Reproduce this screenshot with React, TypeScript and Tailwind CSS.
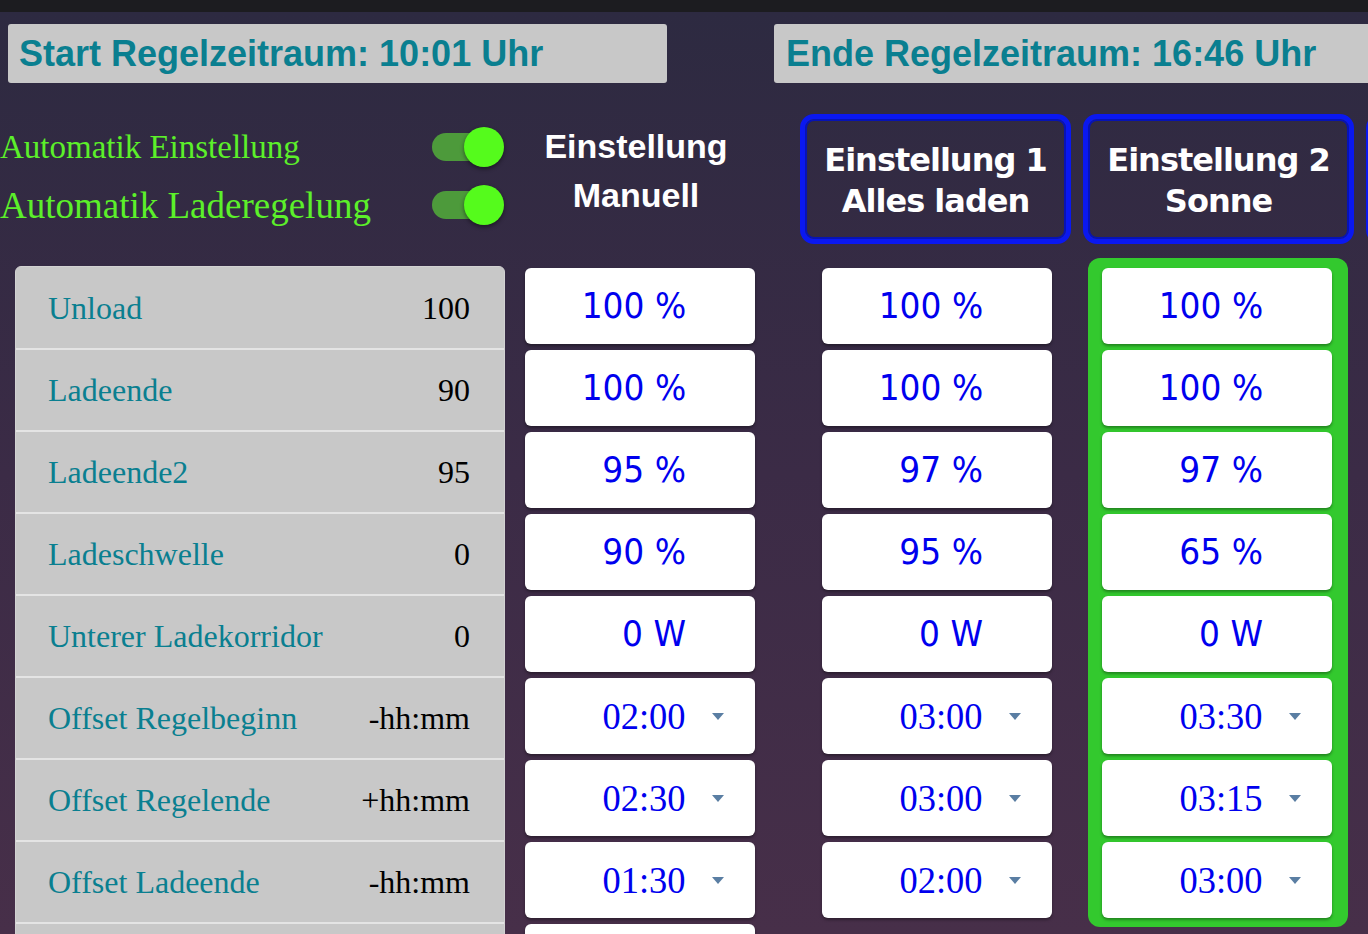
import React from 'react';

type Cell = { value: string; time?: boolean };

const rows: { label: string; unit: string }[] = [
  { label: 'Unload', unit: '100' },
  { label: 'Ladeende', unit: '90' },
  { label: 'Ladeende2', unit: '95' },
  { label: 'Ladeschwelle', unit: '0' },
  { label: 'Unterer Ladekorridor', unit: '0' },
  { label: 'Offset Regelbeginn', unit: '-hh:mm' },
  { label: 'Offset Regelende', unit: '+hh:mm' },
  { label: 'Offset Ladeende', unit: '-hh:mm' },
  { label: '', unit: '' },
];

const pct = (v: string): Cell => ({ value: v });
const tm = (v: string): Cell => ({ value: v, time: true });

const manual: Cell[] = [pct('100 %'), pct('100 %'), pct('95 %'), pct('90 %'), pct('0 W'), tm('02:00'), tm('02:30'), tm('01:30'), pct('')];
const preset1: Cell[] = [pct('100 %'), pct('100 %'), pct('97 %'), pct('95 %'), pct('0 W'), tm('03:00'), tm('03:00'), tm('02:00')];
const preset2: Cell[] = [pct('100 %'), pct('100 %'), pct('97 %'), pct('65 %'), pct('0 W'), tm('03:30'), tm('03:15'), tm('03:00')];

function Caret() {
  return (
    <svg width="12" height="7" viewBox="0 0 12 7" className="ml-[26px] mr-[31px] shrink-0">
      <path d="M0 0h12L6 7z" fill="#5a7ea3" />
    </svg>
  );
}

function ValueCell({ cell }: { cell: Cell }) {
  return (
    <div className="flex h-[76px] w-[230px] items-center justify-end rounded-[6px] bg-white shadow-[0_2px_3px_rgba(0,0,0,0.35)]">
      {cell.time ? (
        <>
          <span className="inline-block origin-right scale-x-[0.96] text-[38px] leading-none text-[#0000ee] [font-family:'Liberation_Serif',serif]">
            {cell.value}
          </span>
          <Caret />
        </>
      ) : (
        <span className="mr-[69px] inline-block origin-right scale-x-[0.94] text-[35px] leading-none text-[#0000ee] [font-family:'DejaVu_Sans',sans-serif]">
          {cell.value}
        </span>
      )}
    </div>
  );
}

function Toggle() {
  return (
    <div className="relative h-[40px] w-[72px]">
      <div className="absolute left-0 top-[6px] h-[28px] w-[56px] rounded-full bg-[#4d9a3b]" />
      <div className="absolute right-0 top-0 h-[40px] w-[40px] rounded-full bg-[#55fb1c] shadow-[0_2px_4px_rgba(0,0,0,0.45)]" />
    </div>
  );
}

function PresetButton({ top, bottom }: { top: string; bottom: string }) {
  return (
    <div className="flex h-[130px] w-[271px] shrink-0 flex-col items-center justify-center rounded-[14px] border-[5px] border-[#0a18f0] pt-[3px] shadow-[inset_0_0_0_2px_#0713b4] text-[32px] font-bold leading-[41px] tracking-[-1px] text-white [font-family:'DejaVu_Sans',sans-serif]">
      <span>{top}</span>
      <span>{bottom}</span>
    </div>
  );
}

export default function App() {
  return (
    <div className="h-[934px] w-[1368px] overflow-hidden bg-[#1c1c20]">
      <div className="mt-3 flex h-[922px] flex-col bg-linear-to-b from-[#2d2a41] via-[#3b2b46] to-[#472f49]">
        {/* time window */}
        <div className="mt-3 flex gap-[107px] pl-2 [font-family:'Liberation_Sans',Arial,sans-serif]">
          <div className="flex h-[59px] w-[659px] shrink-0 items-center rounded-[3px] bg-[#c8c8c8] pl-[11px] text-[36px] font-bold text-[#0a7f90]">
            Start Regelzeitraum: 10:01 Uhr
          </div>
          <div className="flex h-[59px] w-[640px] shrink-0 items-center rounded-[3px] bg-[#c8c8c8] pl-[12px] text-[36px] font-bold text-[#0a7f90]">
            Ende Regelzeitraum: 16:46 Uhr
          </div>
        </div>

        {/* switches and presets */}
        <div className="mt-[31px] flex h-[130px]">
          <div className="relative w-[510px] shrink-0 text-[#5cf02a] [font-family:'Liberation_Serif',serif]">
            <div className="mt-[13px] flex h-[40px] items-center justify-between pr-[6px]">
              <span className="text-[33px] leading-none">Automatik Einstellung</span>
              <Toggle />
            </div>
            <div className="mt-[18px] flex h-[40px] items-center justify-between pr-[6px]">
              <span className="text-[37px] leading-none">Automatik Laderegelung</span>
              <Toggle />
            </div>
          </div>
          <div className="flex w-[252px] shrink-0 flex-col items-center pt-[8px] text-[34px] font-bold leading-[49px] text-white [font-family:'Liberation_Sans',Arial,sans-serif]">
            <span>Einstellung</span>
            <span>Manuell</span>
          </div>
          <div className="ml-[38px] flex gap-[12px]">
            <PresetButton top="Einstellung 1" bottom="Alles laden" />
            <PresetButton top="Einstellung 2" bottom="Sonne" />
            <div className="h-[130px] w-[271px] shrink-0 rounded-[14px] border-[5px] border-[#0a18f0]" />
          </div>
        </div>

        {/* values */}
        <div className="mt-[14px] flex items-start">
          <div className="ml-[15px] mt-[8px] w-[490px] shrink-0 overflow-hidden rounded-t-[6px] border border-[#d2d2d2] bg-[#c8c8c8] [font-family:'Liberation_Serif',serif]">
            {rows.map((r, i) => (
              <div
                key={i}
                className={`flex items-center justify-between pl-[32px] pr-[34px] text-[32px] ${i === 0 ? 'h-[81px]' : 'h-[82px] border-t-2 border-[#e4e4e4]'}`}
              >
                <span className="text-[#0a7f90]">{r.label}</span>
                <span className="text-black">{r.unit}</span>
              </div>
            ))}
          </div>

          <div className="ml-[20px] mt-[10px] flex flex-col gap-[6px]">
            {manual.map((c, i) => (
              <ValueCell key={i} cell={c} />
            ))}
          </div>

          <div className="ml-[67px] mt-[10px] flex flex-col gap-[6px]">
            {preset1.map((c, i) => (
              <ValueCell key={i} cell={c} />
            ))}
          </div>

          <div className="ml-[36px] flex w-[260px] flex-col gap-[6px] rounded-[12px] bg-[#33c92e] pb-[9px] pl-[14px] pt-[10px]">
            {preset2.map((c, i) => (
              <ValueCell key={i} cell={c} />
            ))}
          </div>
        </div>
      </div>
    </div>
  );
}
